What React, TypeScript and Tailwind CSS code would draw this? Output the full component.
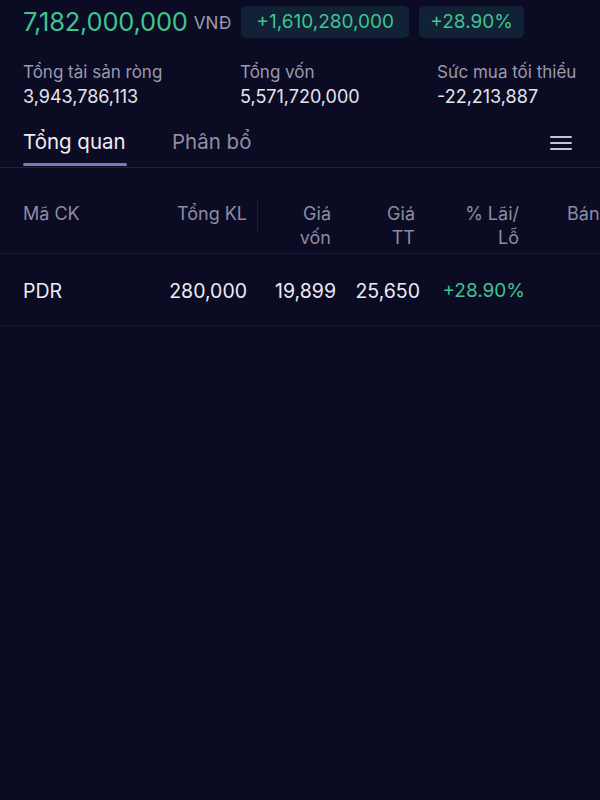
import React from "react";

const stats = [
  { label: "Tổng tài sản ròng", value: "3,943,786,113", w: "w-[217px]" },
  { label: "Tổng vốn", value: "5,571,720,000", w: "w-[197px]" },
  { label: "Sức mua tối thiểu", value: "-22,213,887", w: "w-[200px]" },
];

const App = () => {
  return (
    <div
      className="min-h-[800px] w-[600px] overflow-hidden bg-[#0c0b24] text-[#e6e6ee]"
      style={{ fontFamily: "Inter, 'Noto Sans', sans-serif" }}
    >
      {/* Summary */}
      <div className="flex items-center pl-[23px] pt-[6px]">
        <span className="text-[25.5px] leading-[32px] text-[#3ec48e] tracking-[-0.2px]">
          7,182,000,000
        </span>
        <span className="ml-[6px] mt-[4px] text-[17px] text-[#9c9cb0]">VNĐ</span>
        <span className="ml-[10px] flex h-[32px] w-[168px] items-center justify-center rounded-[5px] bg-[#112236] text-[19px] text-[#3ec48e]">
          +1,610,280,000
        </span>
        <span className="ml-[10px] flex h-[32px] w-[105px] items-center justify-center rounded-[5px] bg-[#112236] text-[19px] text-[#3ec48e]">
          +28.90%
        </span>
      </div>

      <div className="mt-[23px] flex pl-[23px]">
        {stats.map((s) => (
          <div key={s.label} className={`${s.w} shrink-0`}>
            <div className="text-[17px] leading-[22px] text-[#9a9aae]">{s.label}</div>
            <div className="mt-[3px] text-[18px] leading-[22px] text-[#e4e4ec]">{s.value}</div>
          </div>
        ))}
      </div>

      {/* Tabs */}
      <div className="mt-[21px] flex h-[39px] items-start border-b border-[#23223d] pl-[23px] pr-[28px]">
        <div className="flex h-full flex-col">
          <span className="text-[20.5px] leading-[26px] text-[#ececf4]">Tổng quan</span>
          <span className="mt-auto mb-[1px] h-[3px] w-[104px] rounded-full bg-[#7c7ab8]" />
        </div>
        <span className="ml-[45px] text-[20.5px] leading-[26px] text-[#8e8ea6]">Phân bổ</span>
        <svg className="ml-auto mt-[6px]" width="22" height="16" viewBox="0 0 22 16">
          <path d="M1 2h20M1 8h20M1 14h20" stroke="#c4c4d4" strokeWidth="2" strokeLinecap="round" />
        </svg>
      </div>

      {/* Table header */}
      <div className="mt-[32px] flex h-[54px] border-b border-[#1a1932] pt-[2px] text-[18px] leading-[24px] text-[#8c8ca2]">
        <div className="w-[150px] shrink-0 pl-[23px]">Mã CK</div>
        <div className="w-[97px] shrink-0 text-right">Tổng KL</div>
        <div className="ml-[10px] mt-[-2px] h-[32px] w-px shrink-0 bg-[#1f1e38]" />
        <div className="w-[78px] shrink-0 pr-[5px] text-right">
          Giá
          <br />
          vốn
        </div>
        <div className="w-[84px] shrink-0 pr-[5px] text-right">
          Giá
          <br />
          TT
        </div>
        <div className="w-[105px] shrink-0 pr-[6px] text-right">
          % Lãi/
          <br />
          Lỗ
        </div>
        <div className="ml-[42px] shrink-0">Bán</div>
      </div>

      {/* Row */}
      <div className="flex h-[72px] items-center border-b border-[#17162e] pt-[4px] text-[19.5px] text-[#ececf4]">
        <div className="w-[150px] shrink-0 pl-[23px]">PDR</div>
        <div className="w-[97px] shrink-0 text-right">280,000</div>
        <div className="w-[89px] shrink-0 text-right">19,899</div>
        <div className="w-[84px] shrink-0 text-right">25,650</div>
        <div className="w-[105px] shrink-0 text-right text-[19px] text-[#3ec48e]">+28.90%</div>
      </div>
    </div>
  );
};

export default App;
